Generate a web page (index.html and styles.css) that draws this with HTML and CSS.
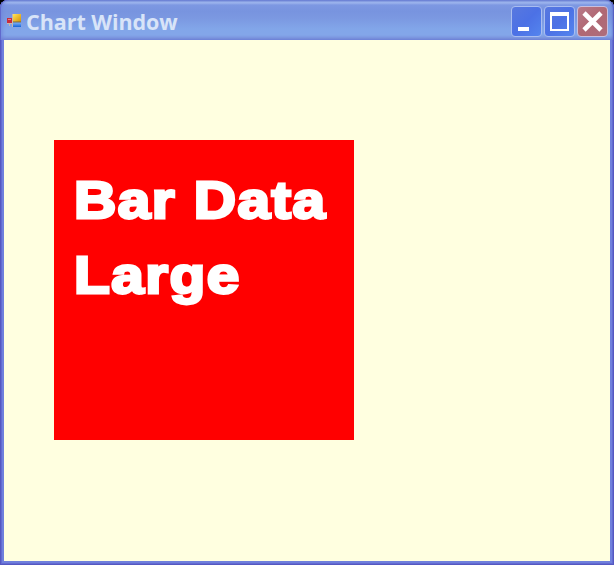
FILE: index.html
```html
<!DOCTYPE html>
<html lang="en">
<head>
<meta charset="utf-8">
<title>Chart Window</title>
<link rel="stylesheet" href="styles.css">
</head>
<body>
<div class="window">
  <header class="titlebar">
    <svg class="app-icon" width="15" height="14" viewBox="0 0 15 14">
      <defs>
        <linearGradient id="gold" x2="1" y2="1"><stop offset="0" stop-color="#ffe45c"/><stop offset="1" stop-color="#d89000"/></linearGradient>
        <linearGradient id="blue" x2="0" y2="1"><stop offset="0" stop-color="#8cbcff"/><stop offset="1" stop-color="#1464d8"/></linearGradient>
      </defs>
      <path d="M2.5 4v8M0 9.5h6M5.5 0v13M5 .5h9" stroke="#c4b8b0" fill="none"/>
      <path d="M0 4h5v5H0z" fill="#c92b3b"/><path d="M1 5h3v1H1z" fill="#ee7d83"/>
      <path d="M6 0h8v8H6z" fill="url(#gold)"/><path d="M6 8h8v5H6z" fill="url(#blue)"/>
      <path d="M6 8h8" stroke="#6c6650"/>
    </svg>
    <h1 class="title">Chart Window</h1>
    <div class="controls">
      <button class="control" aria-label="Minimize"><svg width="31" height="31"><path d="M7 21h11v4H7z" fill="#fff"/></svg></button>
      <button class="control" aria-label="Maximize"><svg width="31" height="31"><path d="M6 6h19v19H6zM8 10v13h15V10z" fill="#fff" fill-rule="evenodd"/></svg></button>
      <button class="control close" aria-label="Close"><svg width="31" height="31"><path d="M7 7l17 17M24 7L7 24" stroke="#fff" stroke-width="4.6"/></svg></button>
    </div>
  </header>
  <main class="client">
    <section class="bar"><p>Bar Data</p><p>Large</p></section>
  </main>
</div>
</body>
</html>
```
FILE: styles.css
```css
* { box-sizing: border-box; }
body { margin: 0; background: #000; overflow: hidden; }
.window {
  width: 614px;
  height: 565px;
  display: flex;
  flex-direction: column;
  padding: 0 4px 4px;
  border-radius: 8px 8px 0 0;
  background: #7080dc;
  box-shadow: inset 1px 0 #5558c0, inset -1px -1px #5558c0, inset 2px 0 #626bd2, inset -2px -2px #626bd2;
}
.titlebar {
  height: 40px;
  flex: none;
  display: flex;
  align-items: flex-start;
  margin: 0 -4px;
  padding: 6px 6px 0 7px;
  border-radius: 8px 8px 0 0;
  background: linear-gradient(#6d84d4 0, #7c94dc 1px, #9cb5ed 2px, #9ab2ec 3px, #7d98e2 5px, #7894df 11px, #7b98e1 18px, #82a6e9 29px, #83a6e9 35px, #7b94df 38px, #7389da 40px);
  box-shadow: inset 1px 0 #6069cd, inset -1px 0 #5660c1, inset 3px 0 3px #6e7fdc88, inset -2px 0 2px #5865c788;
}
.app-icon { margin-top: 8px; flex: none; }
.title {
  margin: 0 0 0 4px;
  flex: 1;
  font: 700 21.5px/31px "Open Sans", sans-serif;
  letter-spacing: -0.05px;
  white-space: nowrap;
  color: #d8e4f8;
}
.controls { display: flex; gap: 2px; }
.control {
  width: 31px;
  height: 31px;
  padding: 0;
  border: 1px solid #a9bdf0;
  border-radius: 4px;
  background: linear-gradient(135deg, #5878df, #4c71e5 50%, #5485ee);
}
.control svg { display: block; margin: -1px; }
.close { background: linear-gradient(135deg, #b87988, #b16873 50%, #ad6d7c); border-color: #c9bfdd; }
.client { flex: 1; background: #ffffe0; padding: 100px 50px; }
.bar {
  width: 300px;
  height: 300px;
  padding: 23px 20px;
  background: #f00;
  color: #fff;
  font: 700 52px/75px "Liberation Sans", Arial, sans-serif;
  letter-spacing: 1.3px;
  -webkit-text-stroke: 2.8px #fff;
  white-space: nowrap;
}
.bar p { margin: 0; transform: scaleX(1.126); transform-origin: left; }
```
